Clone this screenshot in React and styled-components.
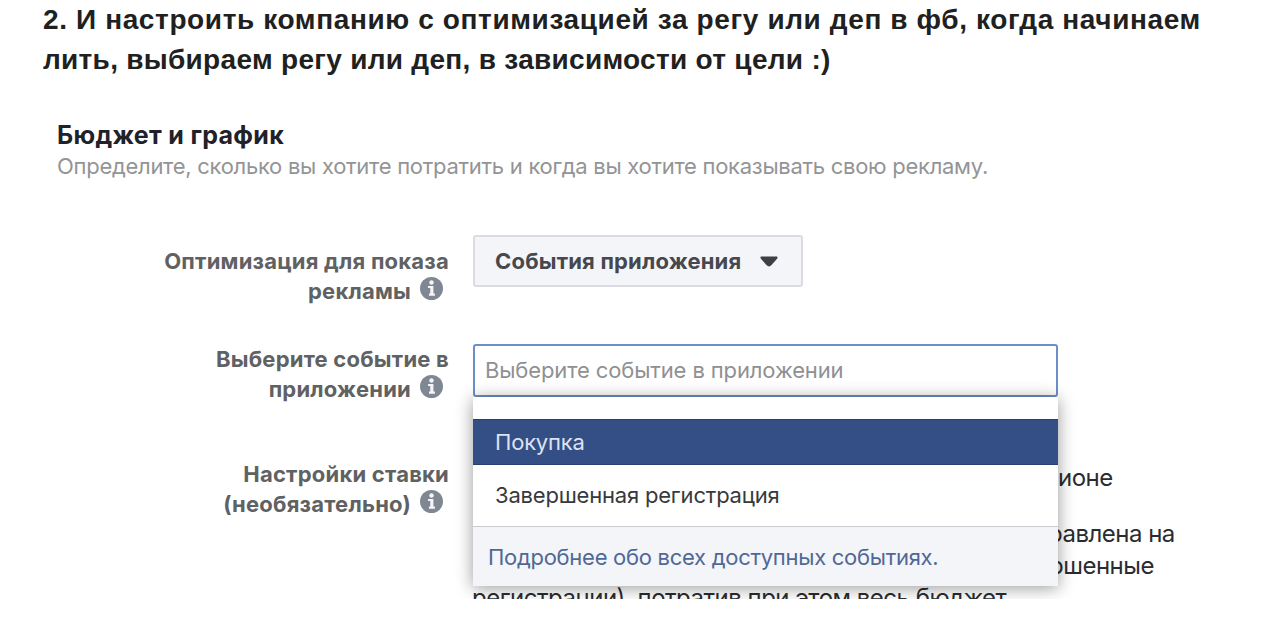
import React from 'react'
import styled, { createGlobalStyle } from 'styled-components'

const GlobalStyle = createGlobalStyle`
    *{
        box-sizing: border-box;
    }
    body{
        margin: 0;
        background-color: #fff;
        font-family: Inter, Roboto, sans-serif;
    }
`;

function InfoIcon() {
    return (
        <InfoStyled viewBox="0 0 24 24">
            <circle cx="12" cy="12" r="12" fill="#7f8792" />
            <circle cx="12" cy="5.8" r="2.3" fill="#f4f5f7" />
            <path d="M8.4 9.3h5.6v8h1.6v2.2H9.4v-2.2h1.3v-5.8H8.4z" fill="#f4f5f7" />
        </InfoStyled>
    )
}

function Field({first, second, gap, labelTop, children}) {
    return (
        <FieldStyled $gap={gap}>
            <Label $top={labelTop}>
                <LabelLine>{first}</LabelLine>
                <LabelLine>{second}<InfoIcon /></LabelLine>
            </Label>
            {children}
        </FieldStyled>
    )
}

function EventSelect() {
    return (
        <SelectStyled>
            <SelectInput>Выберите событие в приложении</SelectInput>
            <Menu>
                <MenuItem $active>Покупка</MenuItem>
                <MenuItem>Завершенная регистрация</MenuItem>
                <MenuFooter>Подробнее обо всех доступных событиях.</MenuFooter>
            </Menu>
        </SelectStyled>
    )
}

function App() {
    return (
        <Page>
            <GlobalStyle />
            <Title>
                <TitleLine $spacing={0.62}>2. И настроить компанию с оптимизацией за регу или деп в фб, когда начинаем</TitleLine>
                <TitleLine $spacing={0.3}>лить, выбираем регу или деп, в зависимости от цели :)</TitleLine>
            </Title>
            <Panel>
                <Heading>Бюджет и график</Heading>
                <Description>Определите, сколько вы хотите потратить и когда вы хотите показывать свою рекламу.</Description>
                <Fields>
                    <Field first="Оптимизация для показа" second="рекламы" gap={57} labelTop={11}>
                        <DropButton>
                            События приложения
                            <Caret viewBox="0 0 18 11">
                                <path d="M1.8.5h14.4c1.5 0 1.8 1.2.9 2.2l-5.8 6.6c-1.4 1.5-3.2 1.5-4.6 0L.9 2.7C0 1.7.3.5 1.8.5z" />
                            </Caret>
                        </DropButton>
                    </Field>
                    <Field first="Выберите событие в" second="приложении" gap={62} labelTop={0}>
                        <EventSelect />
                    </Field>
                    <Field first="Настройки ставки" second="(необязательно)" gap={0} labelTop={1}>
                        <BidText>
                            <BidLine $indent={585}>ионе</BidLine>
                            <BidLine $indent={575} $top={24}>равлена на</BidLine>
                            <BidLine $indent={576}>ршенные</BidLine>
                            <BidLine $indent={-1}>регистрации), потратив при этом весь бюджет</BidLine>
                        </BidText>
                    </Field>
                </Fields>
            </Panel>
        </Page>
    )
}

const Page = styled.div`
    width: 1280px;
    height: 635px;
    overflow: hidden;
    background-color: #fff;
`;

const Title = styled.h1`
    margin: 0;
    padding: 0 0 0 43px;
    font-family: "Liberation Sans", Arial, sans-serif;
    font-size: 28px;
    font-weight: 700;
    line-height: 40px;
    color: #20211e;
`;

const TitleLine = styled.span`
    display: block;
    letter-spacing: ${props => props.$spacing}px;
    white-space: nowrap;
`;

const Panel = styled.section`
    height: 519px;
    padding: 39px 0 0 57px;
    overflow: hidden;
`;

const Heading = styled.h2`
    margin: 0;
    font-size: 25px;
    font-weight: 700;
    line-height: 32px;
    letter-spacing: 0.3px;
    color: #1f222b;
    white-space: nowrap;
`;

const Description = styled.p`
    margin: 0;
    font-size: 22px;
    line-height: 30px;
    letter-spacing: -0.28px;
    color: #939496;
    white-space: nowrap;
`;

const Fields = styled.div`
    padding-top: 54px;
`;

const FieldStyled = styled.div`
    display: flex;
    align-items: flex-start;
    height: 52px;
    margin-bottom: ${props => props.$gap}px;
`;

const Label = styled.div`
    flex: none;
    width: 392px;
    margin-right: 24px;
    padding-top: ${props => props.$top}px;
    font-size: 22px;
    font-weight: 700;
    line-height: 30px;
    letter-spacing: 0.22px;
    color: #606163;
`;

const LabelLine = styled.div`
    display: flex;
    justify-content: flex-end;
    white-space: nowrap;
`;

const InfoStyled = styled.svg`
    width: 23px;
    height: 23px;
    margin: 0.5px 6.5px 0 8.5px;
`;

const DropButton = styled.button`
    display: flex;
    align-items: center;
    justify-content: space-between;
    width: 330px;
    height: 52px;
    padding: 0 23px 0 20px;
    border: 2px solid #dadce1;
    border-radius: 3px;
    background-color: #f4f5f8;
    font-family: inherit;
    font-size: 22px;
    font-weight: 700;
    letter-spacing: 0.18px;
    color: #46484e;
    white-space: nowrap;
`;

const Caret = styled.svg`
    width: 18px;
    height: 11px;
    fill: #3d3f46;
`;

const SelectStyled = styled.div`
    position: relative;
    width: 585px;
`;

const SelectInput = styled.div`
    height: 53px;
    padding: 0 10px;
    border: 2px solid #6c8fca;
    border-radius: 3px;
    background-color: #fff;
    font-size: 22px;
    line-height: 49px;
    letter-spacing: -0.12px;
    color: #8f9093;
    white-space: nowrap;
`;

const Menu = styled.div`
    position: absolute;
    top: 53px;
    left: 0;
    width: 585px;
    height: 189px;
    padding-top: 22px;
    background-color: #fff;
    box-shadow: 0 2px 16px rgba(0, 0, 0, 0.4);
    z-index: 1;
`;

const MenuItem = styled.div`
    height: ${props => props.$active ? 46 : 61}px;
    padding-left: 22px;
    border-top: ${props => props.$active ? '1px solid #2a4170' : 'none'};
    border-bottom: ${props => props.$active ? '1px solid #2a4170' : 'none'};
    background-color: ${props => props.$active ? '#344e86' : '#fff'};
    font-size: 22px;
    line-height: ${props => props.$active ? 44 : 60}px;
    letter-spacing: -0.2px;
    color: ${props => props.$active ? '#dde3ef' : '#38393c'};
    white-space: nowrap;
`;

const MenuFooter = styled.div`
    height: 60px;
    padding-left: 15px;
    border-top: 1px solid #c9cbd0;
    background-color: #f4f5f8;
    font-size: 22px;
    line-height: 60px;
    letter-spacing: -0.28px;
    color: #506896;
    white-space: nowrap;
`;

const BidText = styled.div`
    padding-top: 4px;
    font-size: 24px;
    line-height: 32px;
    letter-spacing: -0.5px;
    color: #2b2c30;
`;

const BidLine = styled.div`
    margin-top: ${props => props.$top || 0}px;
    margin-left: ${props => props.$indent}px;
    white-space: nowrap;
`;

export default App;
